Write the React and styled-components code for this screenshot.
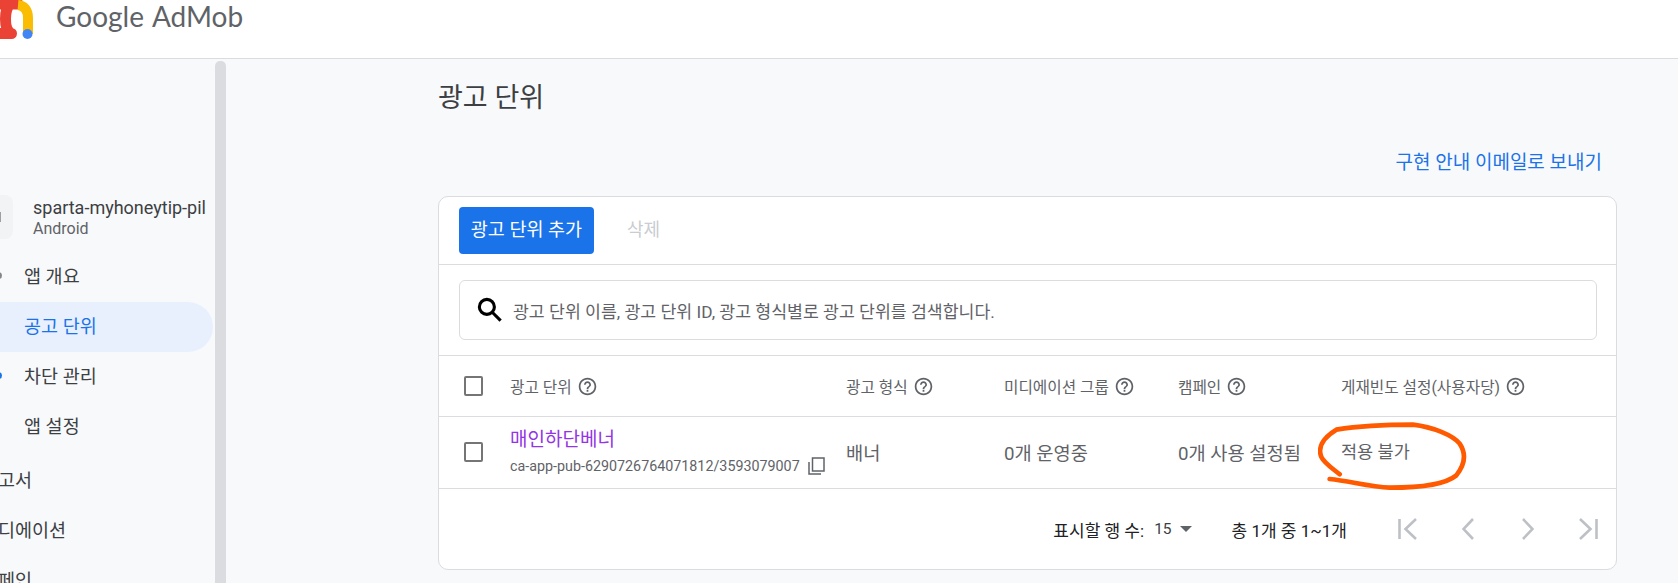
import React from 'react'
import styled, { createGlobalStyle } from 'styled-components'
import { MdHelpOutline } from 'react-icons/md'

const GlobalStyle = createGlobalStyle`
  html, body { margin: 0; padding: 0; background: #f8f9fb; }
  body { font-family: Roboto, "Noto Sans CJK KR", sans-serif; color: #3c4043; overflow: hidden; }
`

const Page = styled.div`
  width: 1678px;
  height: 583px;
  display: flex;
  flex-direction: column;
  overflow: hidden;
`
const TopBar = styled.header`
  height: 58px;
  flex: none;
  background: #fff;
  border-bottom: 1px solid #dadce0;
  display: flex;
  align-items: flex-start;
  gap: 22px;
`
const Logo = styled.svg`
  width: 34px;
  height: 42px;
  flex: none;
`
const Brand = styled.div`
  font-family: Lato, Roboto, sans-serif;
  font-size: 28px;
  line-height: 33px;
  color: #5f6368;
  white-space: nowrap;
  span { margin-left: 8px; }
`
const Body = styled.div`
  flex: 1;
  display: flex;
  min-height: 0;
`
const Sidebar = styled.nav`
  width: 215px;
  flex: none;
  padding-top: 136px;
  overflow: hidden;
`
const Scrollbar = styled.div`
  width: 11px;
  flex: none;
  margin-top: 2px;
  background: #dadce0;
  border-radius: 5px 5px 0 0;
`
const AppInfo = styled.div`
  display: flex;
  align-items: center;
  gap: 20px;
  margin-left: -31px;
  height: 44px;
`
const AppIcon = styled.div`
  width: 44px;
  height: 44px;
  flex: none;
  border-radius: 8px;
  background: #f1f3f4;
  display: flex;
  align-items: center;
  justify-content: flex-end;
  padding-right: 12px;
  box-sizing: border-box;
  &::after {
    content: "";
    width: 2px;
    height: 10px;
    background: #9aa0a6;
  }
`
const AppName = styled.div`
  font-size: 18px;
  line-height: 23px;
  white-space: nowrap;
`
const AppPlatform = styled.div`
  font-size: 16px;
  line-height: 20px;
  color: #5f6368;
`
const SubMenu = styled.div`
  margin-top: 13px;
  display: flex;
  flex-direction: column;
`
const SubItem = styled.div`
  height: 50px;
  box-sizing: border-box;
  padding: 0 0 4px 24px;
  display: flex;
  align-items: center;
  position: relative;
  font-size: 18.5px;
  color: ${p => (p.$active ? '#1a73e8' : '#3c4043')};
  background: ${p => (p.$active ? '#e8f0fe' : 'transparent')};
  border-radius: 0 25px 25px 0;
  margin-right: 2px;
`
const NavDot = styled.span`
  position: absolute;
  left: -5px;
  top: 50%;
  width: 7px;
  height: 7px;
  margin-top: -5px;
  border-radius: 50%;
  background: ${p => p.$color};
`
const MainMenu = styled.div`
  margin-top: 2px;
  display: flex;
  flex-direction: column;
`
const MainItem = styled.div`
  height: 50px;
  display: flex;
  align-items: center;
  margin-left: -19px;
  font-size: 18.5px;
  white-space: nowrap;
  color: #3c4043;
`
const Content = styled.main`
  flex: 1;
  min-width: 0;
  padding: 24px 61px 0 212px;
`
const Title = styled.h1`
  margin: 0;
  font-size: 27px;
  line-height: 30px;
  font-weight: 400;
  color: #3c4043;
`
const LinkRow = styled.div`
  margin-top: 38px;
  padding-right: 15px;
  text-align: right;
  font-size: 19px;
  line-height: 24px;
  color: #1a73e8;
`
const Card = styled.section`
  margin-top: 21px;
  background: #fff;
  border: 1px solid #dadce0;
  border-radius: 10px;
`
const Toolbar = styled.div`
  height: 68px;
  box-sizing: border-box;
  padding: 9px 20px;
  display: flex;
  align-items: center;
  gap: 33px;
  border-bottom: 1px solid #dadce0;
`
const PrimaryButton = styled.button`
  width: 135px;
  height: 47px;
  border: 0;
  border-radius: 4px;
  background: #1a73e8;
  color: #fff;
  font: inherit;
  font-size: 18.5px;
  padding: 0 0 6px;
`
const GhostButton = styled.button`
  border: 0;
  background: none;
  padding: 0 0 6px;
  font: inherit;
  font-size: 18px;
  color: #c9ccd1;
`
const SearchSection = styled.div`
  padding: 15px 19px 15px 20px;
  height: 91px;
  box-sizing: border-box;
  border-bottom: 1px solid #dadce0;
`
const SearchBox = styled.div`
  height: 60px;
  box-sizing: border-box;
  border: 1px solid #dadce0;
  border-radius: 6px;
  display: flex;
  align-items: center;
  padding-left: 15px;
  gap: 8px;
  font-size: 17.25px;
  color: #5f6368;
`
const SearchIcon = styled.svg`
  width: 30px;
  height: 30px;
  flex: none;
  fill: none;
  stroke: #000;
  stroke-width: 2.5;
`
const TableRow = styled.div`
  display: grid;
  grid-template-columns: 71px 336px 158px 174px 163px 1fr;
  align-items: center;
  height: ${p => p.$height}px;
  box-sizing: border-box;
  padding-bottom: ${p => p.$lift || 0}px;
  border-bottom: 1px solid #dadce0;
  font-size: 15.7px;
  color: #5f6368;
`
const CheckCell = styled.div`
  padding-left: 25px;
  display: flex;
`
const Checkbox = styled.span`
  width: 19px;
  height: 20px;
  box-sizing: border-box;
  border: 2px solid #757575;
  border-radius: 2px;
`
const HeadLabel = styled.div`
  display: flex;
  align-items: center;
  gap: 5px;
  white-space: nowrap;
  svg { color: #5f6368; flex: none; }
`
const UnitName = styled.div`
  font-size: 19px;
  line-height: 24px;
  color: #9334e6;
`
const UnitId = styled.div`
  display: flex;
  align-items: center;
  gap: 8px;
  margin-top: 4px;
  font-size: 14.3px;
  line-height: 20px;
  color: #5f6368;
  white-space: nowrap;
`
const CopyIcon = styled.svg`
  width: 17px;
  height: 18px;
  flex: none;
`
const BodyText = styled.div`
  font-size: 18.7px;
  color: #5f6368;
  white-space: nowrap;
`
const StatusCell = styled.div`
  position: relative;
  font-size: 17.5px;
  line-height: 24px;
  color: #5f6368;
  white-space: nowrap;
`
const Scribble = styled.svg`
  position: absolute;
  left: -23px;
  top: -18px;
  width: 150px;
  height: 70px;
  pointer-events: none;
`
const Footer = styled.div`
  height: 80px;
  display: flex;
  align-items: center;
  justify-content: flex-end;
  padding-right: 18px;
  font-size: 17px;
  color: #202124;
`
const RowsLabel = styled.span`
  white-space: nowrap;
`
const RowsValue = styled.span`
  margin-left: 10px;
  font-size: 15.5px;
  color: #3c4043;
`
const Caret = styled.span`
  margin-left: 8px;
  width: 0;
  height: 0;
  border-left: 6px solid transparent;
  border-right: 6px solid transparent;
  border-top: 6px solid #5f6368;
`
const RangeText = styled.span`
  margin-left: 40px;
  white-space: nowrap;
`
const Pager = styled.div`
  margin-left: 51px;
  display: flex;
  align-items: center;
`
const PagerIcon = styled.svg`
  width: ${p => p.$w}px;
  height: 24px;
  flex: none;
  margin-left: ${p => p.$gap || 0}px;
  fill: none;
  stroke: #bdc1c6;
  stroke-width: 2.6;
`

const HelpLabel = ({ children }) => (
  <HeadLabel>
    {children}
    <MdHelpOutline size={21} />
  </HeadLabel>
)

const App = () => {
  return (
    <Page>
      <GlobalStyle />
      <TopBar>
        <Logo viewBox="0 0 34 42">
          <path d="M-4 4H18M-4 33.500H11.500M10 4C4 10 4 28 10 33" fill="none" stroke="#ea4335" strokeWidth="11" strokeLinecap="round" />
          <path d="M18 5C24 5.500 28 10 28 18V34" fill="none" stroke="#fbbc04" strokeWidth="10" />
          <circle cx="27.500" cy="34" r="5" fill="#4285f4" />
        </Logo>
        <Brand>Google<span>AdMob</span></Brand>
      </TopBar>
      <Body>
        <Sidebar>
          <AppInfo>
            <AppIcon />
            <div>
              <AppName>sparta-myhoneytip-pil</AppName>
              <AppPlatform>Android</AppPlatform>
            </div>
          </AppInfo>
          <SubMenu>
            <SubItem><NavDot $color="#80868b" />앱 개요</SubItem>
            <SubItem $active>공고 단위</SubItem>
            <SubItem><NavDot $color="#1a73e8" />차단 관리</SubItem>
            <SubItem>앱 설정</SubItem>
          </SubMenu>
          <MainMenu>
            <MainItem>보고서</MainItem>
            <MainItem>미디에이션</MainItem>
            <MainItem>캠페인</MainItem>
          </MainMenu>
        </Sidebar>
        <Scrollbar />
        <Content>
          <Title>광고 단위</Title>
          <LinkRow>구현 안내 이메일로 보내기</LinkRow>
          <Card>
            <Toolbar>
              <PrimaryButton>광고 단위 추가</PrimaryButton>
              <GhostButton>삭제</GhostButton>
            </Toolbar>
            <SearchSection>
              <SearchBox>
                <SearchIcon viewBox="0 0 24 24">
                  <circle cx="9.500" cy="9.500" r="6" />
                  <path d="M14 14L20.500 20.500" />
                </SearchIcon>
                광고 단위 이름, 광고 단위 ID, 광고 형식별로 광고 단위를 검색합니다.
              </SearchBox>
            </SearchSection>
            <TableRow $height={61}>
              <CheckCell><Checkbox /></CheckCell>
              <HelpLabel>광고 단위</HelpLabel>
              <HelpLabel>광고 형식</HelpLabel>
              <HelpLabel>미디에이션 그룹</HelpLabel>
              <HelpLabel>캠페인</HelpLabel>
              <HelpLabel>게재빈도 설정(사용자당)</HelpLabel>
            </TableRow>
            <TableRow $height={72} $lift={2}>
              <CheckCell><Checkbox /></CheckCell>
              <div>
                <UnitName>매인하단베너</UnitName>
                <UnitId>
                  ca-app-pub-6290726764071812/3593079007
                  <CopyIcon viewBox="0 0 17 18" fill="none" stroke="#5f6368" strokeWidth="1.5">
                    <rect x="4.500" y="1" width="11.500" height="13" />
                    <path d="M1 5v12h12" />
                  </CopyIcon>
                </UnitId>
              </div>
              <BodyText>배너</BodyText>
              <BodyText>0개 운영중</BodyText>
              <BodyText>0개 사용 설정됨</BodyText>
              <StatusCell>
                적용 불가
                <Scribble viewBox="715 275 450 210" fill="none" stroke="#ff5a00" strokeWidth="14" strokeLinecap="round">
                  <path d="M780 432C760 415 735 400 725 380C715 355 725 325 770 298C820 290 900 283 1000 283C1060 290 1120 315 1140 340C1160 370 1158 400 1130 435C1100 460 1030 472 930 472C870 470 810 452 750 446" />
                </Scribble>
              </StatusCell>
            </TableRow>
            <Footer>
              <RowsLabel>표시할 행 수:</RowsLabel>
              <RowsValue>15</RowsValue>
              <Caret />
              <RangeText>총 1개 중 1~1개</RangeText>
              <Pager>
                <PagerIcon $w={20} viewBox="0 0 20 24">
                  <path d="M1.500 2V22M18 2L7.500 12L18 22" />
                </PagerIcon>
                <PagerIcon $w={12} $gap={44} viewBox="0 0 12 24">
                  <path d="M11 2L1.500 12L11 22" />
                </PagerIcon>
                <PagerIcon $w={12} $gap={48} viewBox="0 0 12 24">
                  <path d="M1 2L10.500 12L1 22" />
                </PagerIcon>
                <PagerIcon $w={20} $gap={44} viewBox="0 0 20 24">
                  <path d="M18.500 2V22M2 2L12.500 12L2 22" />
                </PagerIcon>
              </Pager>
            </Footer>
          </Card>
        </Content>
      </Body>
    </Page>
  )
}

export default App
